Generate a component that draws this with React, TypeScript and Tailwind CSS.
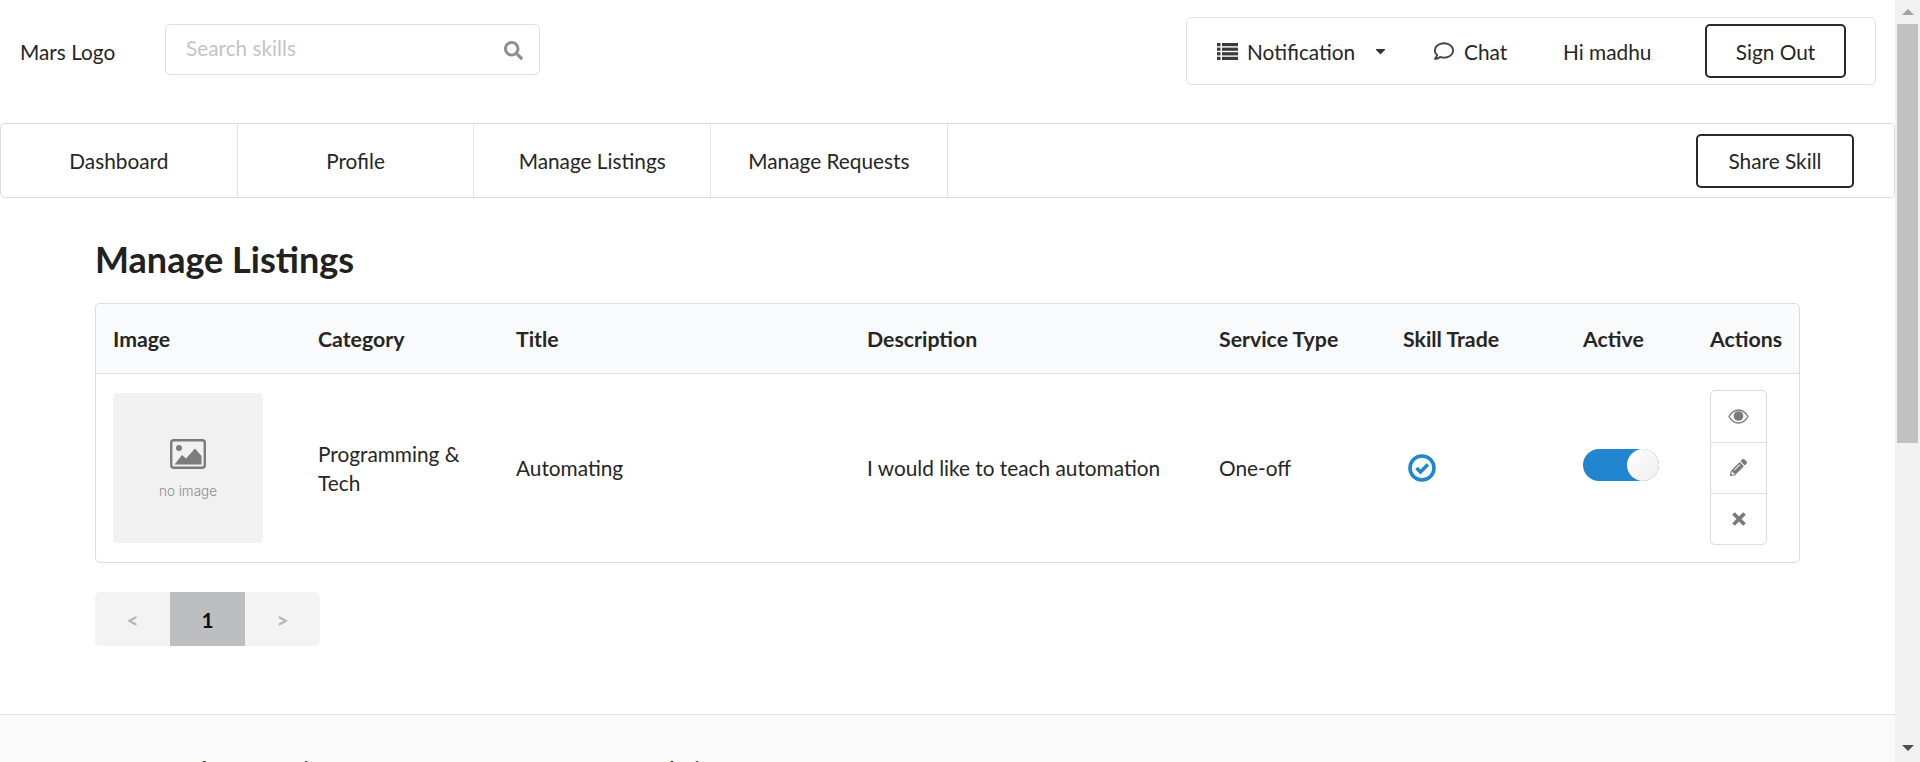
import { FaRegComment, FaSearch, FaPencilAlt, FaCaretDown } from 'react-icons/fa';

const navItems = ['Dashboard', 'Profile', 'Manage Listings', 'Manage Requests'];
const columns = ['Image', 'Category', 'Title', 'Description', 'Service Type', 'Skill Trade', 'Active', 'Actions'];
const gridCols = 'grid grid-cols-[205px_198px_351px_352px_184px_180px_127px_1fr]';

function ListIcon() {
  return (
    <svg width="21" height="17" viewBox="0 0 21 17" fill="#3b3b3b">
      <rect x="0" y="0" width="3.5" height="3.2" />
      <rect x="5" y="0" width="16" height="3.2" />
      <rect x="0" y="4.6" width="3.5" height="3.2" />
      <rect x="5" y="4.6" width="16" height="3.2" />
      <rect x="0" y="9.2" width="3.5" height="3.2" />
      <rect x="5" y="9.2" width="16" height="3.2" />
      <rect x="0" y="13.8" width="3.5" height="3.2" />
      <rect x="5" y="13.8" width="16" height="3.2" />
    </svg>
  );
}

function EyeIcon() {
  return (
    <svg width="21" height="15" viewBox="0 0 21 15">
      <path d="M1 7.5 C4 2.5 7 1 10.5 1 C14 1 17 2.5 20 7.5 C17 12.5 14 14 10.5 14 C7 14 4 12.5 1 7.5 Z" fill="none" stroke="#7a7a7a" strokeWidth="1.4" />
      <circle cx="10.5" cy="7" r="4.8" fill="#7a7a7a" />
    </svg>
  );
}

function CrossIcon() {
  return (
    <svg width="14" height="14" viewBox="0 0 14 14" stroke="#7a7a7a" strokeWidth="3.8">
      <path d="M1.5 1.5 L12.5 12.5 M12.5 1.5 L1.5 12.5" />
    </svg>
  );
}

function CheckIcon() {
  return (
    <svg width="28" height="28" viewBox="0 0 28 28" fill="none" stroke="#2185d0">
      <circle cx="14" cy="14" r="12" strokeWidth="3.6" />
      <path d="M8.5 14 L12.5 18 L19.8 10.5" strokeWidth="3.6" />
    </svg>
  );
}

function Header() {
  return (
    <div className="mt-[17px] flex h-[68px] shrink-0 items-center pr-[19px]">
      <span className="ml-[20px] w-[145px] pt-[1px]">Mars Logo</span>
      <div className="flex h-[51px] w-[375px] -translate-y-[2px] items-center rounded-[5px] border border-[#dedede] pr-[16px] pl-[20px]">
        <input
          placeholder="Search skills"
          className="min-w-0 flex-1 -translate-y-[1px] outline-none placeholder:text-[#c4c4c4]"
        />
        <FaSearch className="h-[19px] w-[19px] translate-y-[1px] text-[#8f8f8f]" />
      </div>
      <div className="ml-auto flex h-[68px] w-[690px] items-center rounded-[5px] border border-[#e3e3e3] pl-[30px]">
        <ListIcon />
        <span className="ml-[9px] w-[111px] pt-[1px]">Notification</span>
        <FaCaretDown className="ml-[17px] h-[16px] w-[11px] text-[#333]" />
        <FaRegComment className="ml-[47px] h-[20px] w-[22px] text-[#444]" />
        <span className="ml-[9px] w-[44px] pt-[1px]">Chat</span>
        <span className="ml-[55px] w-[87px] pt-[1px] whitespace-nowrap">Hi madhu</span>
        <button className="ml-[55px] h-[54px] w-[141px] rounded-[5px] border-2 border-[#2a2a2a] bg-white pt-[1px]">Sign Out</button>
      </div>
    </div>
  );
}

function Nav() {
  return (
    <div className="mt-[38px] flex h-[75px] shrink-0 items-center rounded-[5px] border border-[#dcdcdc] pr-[40px]">
      {navItems.map((item) => (
        <div key={item} className="flex h-full w-[236.7px] items-center justify-center border-r border-[#e4e4e4]">
          {item}
        </div>
      ))}
      <button className="mt-[1px] ml-auto h-[54px] w-[158px] rounded-[5px] border-2 border-[#2a2a2a] bg-white">Share Skill</button>
    </div>
  );
}

function NoImage() {
  return (
    <div className="flex h-[150px] w-[150px] flex-col items-center rounded-[5px] bg-[#f1f1f1] pt-[46px]">
      <svg width="36" height="30" viewBox="0 0 36 30">
        <rect x="1.2" y="1.2" width="33.6" height="27.6" rx="2.5" fill="none" stroke="#7c7c7c" strokeWidth="2.4" />
        <circle cx="9" cy="9" r="3" fill="#7c7c7c" />
        <path d="M4.5 25.5 L12 16 L16 19.5 L25 9.5 L31.5 17 V25.5 Z" fill="#7c7c7c" />
      </svg>
      <span className="mt-[14px] font-['Inter',sans-serif] text-[13.5px] leading-[16px] font-light text-[#8c8c8c]">no image</span>
    </div>
  );
}

function ListingTable() {
  return (
    <div className="mt-[22px] w-[1705px] rounded-[5px] border border-[#dcdcdc]">
      <div className={`${gridCols} h-[70px] items-center rounded-t-[5px] border-b border-[#dedede] bg-[#f9fafb] pt-[2px] text-[21.3px] font-bold`}>
        {columns.map((col) => (
          <div key={col} className="pl-[17px]">{col}</div>
        ))}
      </div>
      <div className={`${gridCols} h-[188px] items-center`}>
        <div className="pl-[17px]"><NoImage /></div>
        <div className="pr-[17px] pl-[17px] leading-[29px]">Programming &amp; Tech</div>
        <div className="pl-[17px]">Automating</div>
        <div className="pl-[17px]">I would like to teach automation</div>
        <div className="pl-[17px]">One-off</div>
        <div className="pl-[22px]"><CheckIcon /></div>
        <div className="pl-[17px]">
          <div className="flex h-[32px] w-[76px] -translate-y-[3px] justify-end rounded-full bg-[#2185d0]">
            <div className="h-[32px] w-[32px] rounded-full bg-gradient-to-br from-white to-[#ededed]" />
          </div>
        </div>
        <div className="-translate-y-[1px] pl-[17px]">
          <div className="flex w-[57px] flex-col rounded-[5px] border border-[#dcdcdc]">
            <div className="flex h-[52px] items-center justify-center border-b border-[#dedede]"><EyeIcon /></div>
            <div className="flex h-[51px] items-center justify-center border-b border-[#dedede]"><FaPencilAlt className="h-[17px] w-[17px] text-[#7a7a7a]" /></div>
            <div className="flex h-[50px] items-center justify-center"><CrossIcon /></div>
          </div>
        </div>
      </div>
    </div>
  );
}

function Pagination() {
  return (
    <div className="mt-[29px] flex h-[54px] w-[225px] overflow-hidden rounded-[5px] bg-[#f3f3f3] font-bold">
      <div className="flex w-[75px] items-center justify-center pt-[2px] text-[#b5b5b5]">&lt;</div>
      <div className="flex w-[75px] items-center justify-center bg-[#bdbebf] pt-[2px] text-[#0c0c1c]">1</div>
      <div className="flex w-[75px] items-center justify-center pt-[2px] text-[#b5b5b5]">&gt;</div>
    </div>
  );
}

function Scrollbar() {
  return (
    <div className="flex w-[25px] shrink-0 flex-col items-center bg-[#f1f1f1]">
      <div className="flex h-[24px] items-center justify-center">
        <div className="h-0 w-0 border-x-[6px] border-b-[6px] border-x-transparent border-b-[#a3a3a3]" />
      </div>
      <div className="h-[419px] w-[21px] bg-[#c1c1c1]" />
      <div className="mt-auto flex h-[28px] items-center justify-center">
        <div className="h-0 w-0 border-x-[6px] border-t-[6px] border-x-transparent border-t-[#505050]" />
      </div>
    </div>
  );
}

export default function App() {
  return (
    <div className="flex h-[762px] overflow-hidden bg-white font-['Lato',sans-serif] text-[20.8px] text-[#262626]">
      <div className="flex min-w-0 flex-1 flex-col">
        <Header />
        <Nav />
        <div className="shrink-0 px-[95px]">
          <h1 className="mt-[39px] text-[36px] leading-[44px] font-bold text-[#212121]">Manage Listings</h1>
          <ListingTable />
          <Pagination />
        </div>
        <div className="mt-[68px] flex flex-1 gap-[317px] border-t border-[#e2e2e2] bg-[#fafafa] pt-[38px] pl-[154px] font-bold">
          <span>Popular Categories</span>
          <span>Solutions</span>
        </div>
      </div>
      <Scrollbar />
    </div>
  );
}
